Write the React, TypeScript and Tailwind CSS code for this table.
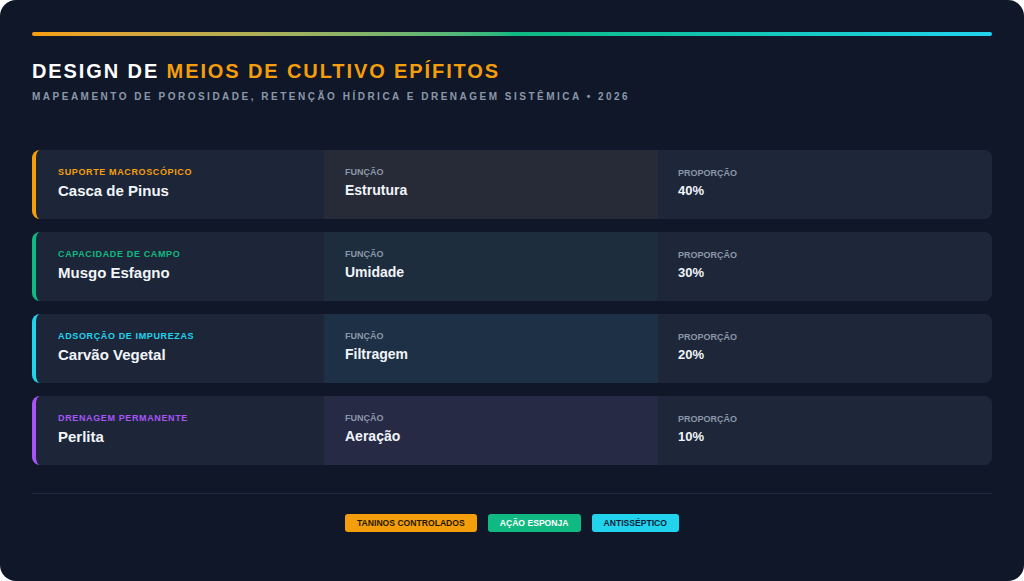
const rows = [
  {
    tag: 'Suporte Macroscópico',
    name: 'Casca de Pinus',
    func: 'Estrutura',
    pct: '40%',
    border: 'border-[#f59e0b]',
    tagColor: 'text-[#f59e0b]',
    mid: 'bg-[#272b37]',
  },
  {
    tag: 'Capacidade de Campo',
    name: 'Musgo Esfagno',
    func: 'Umidade',
    pct: '30%',
    border: 'border-[#10b981]',
    tagColor: 'text-[#10b981]',
    mid: 'bg-[#1e2d3e]',
  },
  {
    tag: 'Adsorção de Impurezas',
    name: 'Carvão Vegetal',
    func: 'Filtragem',
    pct: '20%',
    border: 'border-[#22d3ee]',
    tagColor: 'text-[#22d3ee]',
    mid: 'bg-[#1e3045]',
  },
  {
    tag: 'Drenagem Permanente',
    name: 'Perlita',
    func: 'Aeração',
    pct: '10%',
    border: 'border-[#a855f7]',
    tagColor: 'text-[#a855f7]',
    mid: 'bg-[#272a45]',
  },
];

const App = () => {
  return (
    <div className="w-[1024px] h-[581px] bg-white font-['Liberation_Sans',Arial,sans-serif]">
      <div className="w-full h-full rounded-2xl bg-[#0f1729] px-8 pt-8 flex flex-col">
        <div className="h-1 w-full rounded-full bg-gradient-to-r from-[#f59e0b] via-[#10b981] to-[#22d3ee]" />

        <h1 className="mt-[22px] text-[20px] leading-[26px] font-bold tracking-[0.095em] text-white">
          DESIGN DE <span className="text-[#f59e0b]">MEIOS DE CULTIVO EPÍFITOS</span>
        </h1>
        <p className="mt-[6px] text-[10px] leading-[14px] font-bold tracking-[0.25em] text-[#8b97a9] uppercase">
          Mapeamento de Porosidade, Retenção Hídrica e Drenagem Sistêmica • 2026
        </p>

        <div className="mt-[46px] flex flex-col gap-[13px]">
          {rows.map((r) => (
            <div
              key={r.name}
              className={`h-[69px] rounded-lg border-l-4 ${r.border} bg-[#1d2638] grid grid-cols-[288px_334px_1fr] overflow-hidden`}
            >
              <div className="pl-[22px] pb-1 flex flex-col justify-center">
                <span className={`text-[9px] leading-[12px] font-bold tracking-[0.07em] uppercase ${r.tagColor}`}>
                  {r.tag}
                </span>
                <span className="mt-[3px] text-[15px] leading-[19px] font-bold text-[#f1f5f9]">{r.name}</span>
              </div>
              <div className={`pl-[21px] pb-1 flex flex-col justify-center ${r.mid}`}>
                <span className="text-[9px] leading-[12px] font-bold text-[#8b97a9] uppercase">Função</span>
                <span className="mt-[3px] text-[14px] leading-[18px] font-bold text-[#f1f5f9]">{r.func}</span>
              </div>
              <div className="pl-[20px] pb-1 flex flex-col justify-center bg-[#1e2739]">
                <span className="text-[9px] leading-[12px] font-bold text-[#8b97a9] uppercase">Proporção</span>
                <span className="mt-[3px] text-[13px] leading-[17px] font-bold text-[#f1f5f9]">{r.pct}</span>
              </div>
            </div>
          ))}
        </div>

        <div className="mt-[28px] h-px w-full bg-[#1e293b]" />

        <div className="mt-5 flex justify-center gap-[11px]">
          <span className="h-[18px] px-3 rounded-[3px] bg-[#f59e0b] text-[#1f1705] text-[8.6px] font-bold uppercase flex items-center">
            Taninos Controlados
          </span>
          <span className="h-[18px] px-3 rounded-[3px] bg-[#10b981] text-white text-[8.6px] font-bold uppercase flex items-center">
            Ação Esponja
          </span>
          <span className="h-[18px] px-3 rounded-[3px] bg-[#22d3ee] text-[#0f1f3a] text-[8.6px] font-bold uppercase flex items-center">
            Antisséptico
          </span>
        </div>
      </div>
    </div>
  );
};

export default App;
